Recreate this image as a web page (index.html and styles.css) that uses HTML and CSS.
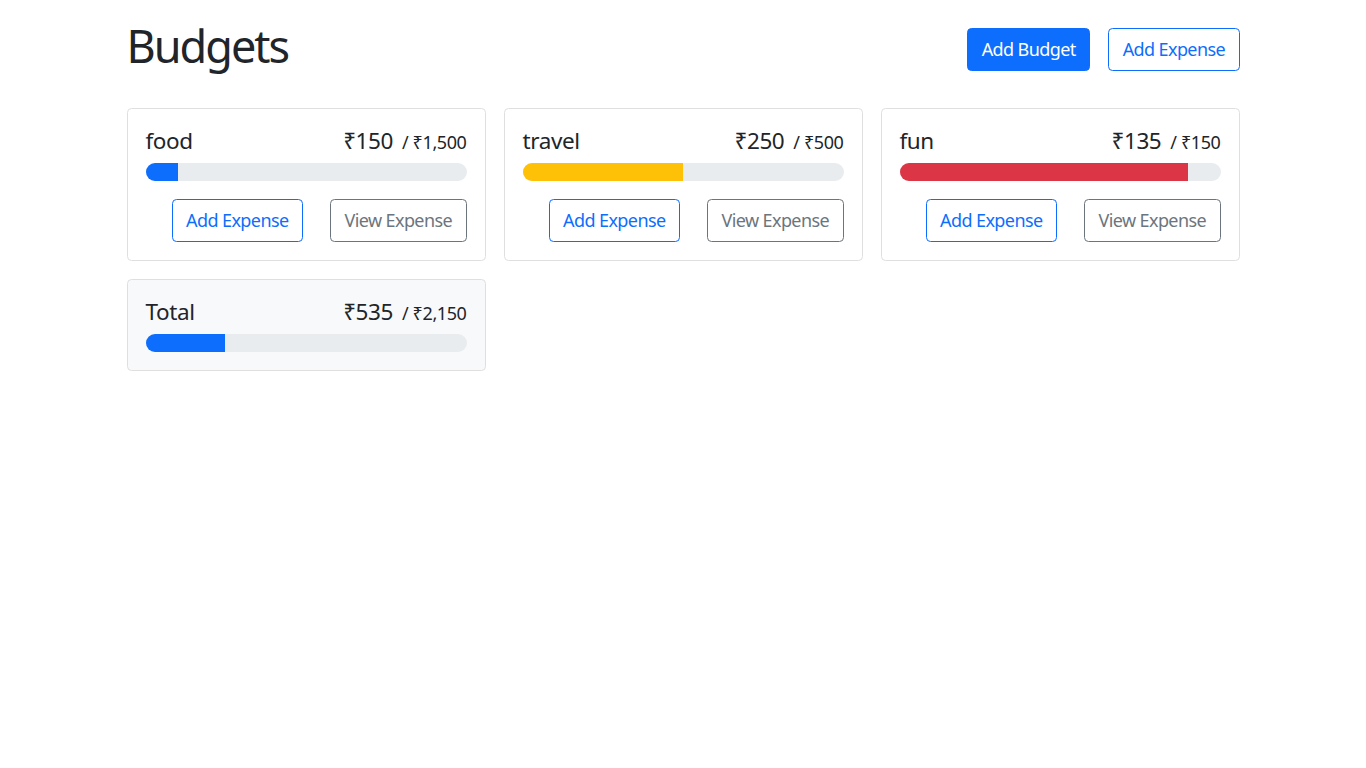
FILE: index.html
```html
<!DOCTYPE html>
<html lang="en">
<head>
<meta charset="utf-8">
<title>Budgets</title>
<link rel="stylesheet" href="styles.css">
</head>
<body>
<div class="container">
  <div class="header">
    <h1 class="title">Budgets</h1>
    <button class="btn btn-primary">Add Budget</button>
    <button class="btn btn-outline-primary">Add Expense</button>
  </div>
  <div class="grid">
    <div class="card">
      <div class="card-title">
        <div class="name">food</div>
        <div class="amount">₹150<span class="max">/ ₹1,500</span></div>
      </div>
      <div class="progress"><div class="bar bar-primary" style="width: 10%"></div></div>
      <div class="actions">
        <button class="btn btn-outline-primary">Add Expense</button>
        <button class="btn btn-outline-secondary">View Expense</button>
      </div>
    </div>
    <div class="card">
      <div class="card-title">
        <div class="name">travel</div>
        <div class="amount">₹250<span class="max">/ ₹500</span></div>
      </div>
      <div class="progress"><div class="bar bar-warning" style="width: 50%"></div></div>
      <div class="actions">
        <button class="btn btn-outline-primary">Add Expense</button>
        <button class="btn btn-outline-secondary">View Expense</button>
      </div>
    </div>
    <div class="card">
      <div class="card-title">
        <div class="name">fun</div>
        <div class="amount">₹135<span class="max">/ ₹150</span></div>
      </div>
      <div class="progress"><div class="bar bar-danger" style="width: 90%"></div></div>
      <div class="actions">
        <button class="btn btn-outline-primary">Add Expense</button>
        <button class="btn btn-outline-secondary">View Expense</button>
      </div>
    </div>
    <div class="card card-light">
      <div class="card-title">
        <div class="name">Total</div>
        <div class="amount">₹535<span class="max">/ ₹2,150</span></div>
      </div>
      <div class="progress"><div class="bar bar-primary" style="width: 24.88%"></div></div>
    </div>
  </div>
</div>
</body>
</html>
```
FILE: styles.css
```css
* { box-sizing: border-box; }
html { font-size: 18px; }
body {
  margin: 0;
  font-family: "Noto Sans", "Open Sans", "DejaVu Sans", sans-serif;
  font-size: 18px;
  line-height: 1.5;
  color: #212529;
  background: #fff;
  letter-spacing: -0.4px;
}
.container {
  width: 1113px;
  margin: 0 auto;
  padding-top: 19px;
}
.header {
  display: flex;
  align-items: center;
  gap: 18px;
  margin-bottom: 29px;
}
.title {
  margin: 0 auto 6px 0;
  font-size: 45px;
  font-weight: 400;
  line-height: 54px;
  letter-spacing: -2px;
}
.btn {
  font-family: inherit;
  font-size: 18px;
  line-height: 27px;
  letter-spacing: -0.6px;
  padding: 7px 13.5px;
  border: 1px solid transparent;
  border-radius: 4.5px;
  background: transparent;
  cursor: pointer;
}
.btn-primary { background: #0d6efd; border-color: #0d6efd; color: #fff; }
.btn-outline-primary { border-color: #0d6efd; color: #0d6efd; background: #fff; }
.btn-outline-secondary { border-color: #6c757d; color: #6c757d; background: #fff; }
.grid {
  display: grid;
  grid-template-columns: repeat(3, 1fr);
  gap: 18px;
  align-items: start;
}
.card {
  border: 1px solid #dfdfdf;
  border-radius: 4.5px;
  padding: 18px;
  background: #fff;
}
.card-light { background: #f8f9fa; }
.card-title {
  display: flex;
  justify-content: space-between;
  align-items: baseline;
  font-size: 22.5px;
  line-height: 27px;
  margin-bottom: 9px;
}
.amount { display: flex; align-items: baseline; }
.max {
  font-size: 18px;
  line-height: 18px;
  margin-left: 9px;
}
.progress {
  height: 18px;
  background: #e9ecef;
  border-radius: 50rem;
  overflow: hidden;
  display: flex;
}
.bar { height: 100%; }
.bar-primary { background: #0d6efd; }
.bar-warning { background: #ffc107; }
.bar-danger { background: #dc3545; }
.actions {
  display: flex;
  justify-content: flex-end;
  gap: 27px;
  margin-top: 18px;
}
```
